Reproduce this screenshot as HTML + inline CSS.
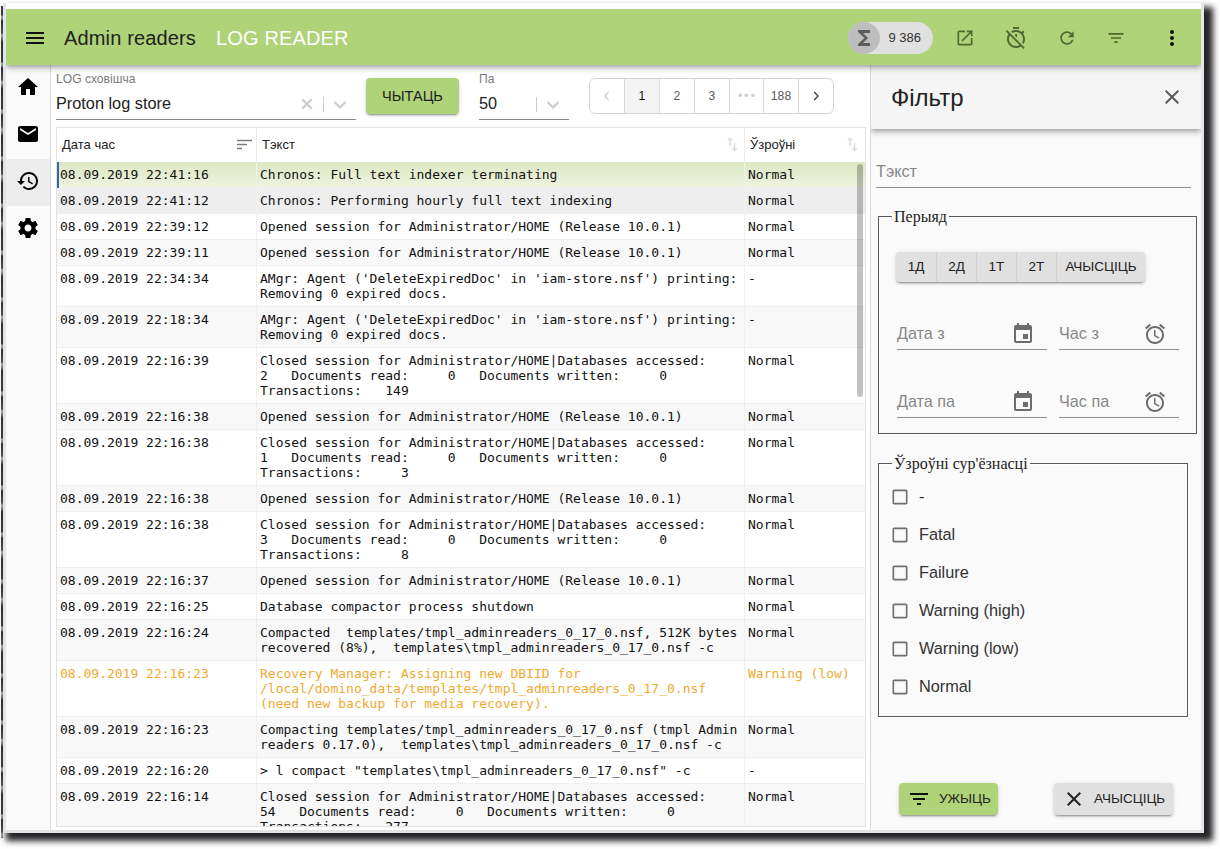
<!DOCTYPE html>
<html lang="be">
<head>
<meta charset="utf-8">
<title>Admin readers - LOG READER</title>
<style>
*{box-sizing:border-box;margin:0;padding:0}
html,body{width:1220px;height:849px;overflow:hidden;background:#fff}
body{font-family:"Liberation Sans",sans-serif;color:#212121;position:relative}
.abs{position:absolute}
#frame{position:absolute;left:6px;top:9px;width:1195px;height:821px;background:#fff;overflow:hidden}
#leftline{position:absolute;left:.8px;top:6px;width:2.400px;height:832px;filter:blur(.5px);background:repeating-linear-gradient(180deg,rgba(25,25,28,.85) 0,rgba(25,25,28,.85) 9px,rgba(25,25,28,.35) 10px,rgba(25,25,28,.45) 13px,rgba(25,25,28,.9) 15px,rgba(25,25,28,.75) 27px,rgba(25,25,28,.3) 29px,rgba(25,25,28,.6) 33px,rgba(25,25,28,.9) 36px,rgba(25,25,28,.85) 47px)}
#shadow{position:absolute;left:6px;top:7px;width:1206.500px;height:833.500px;background:#242427;filter:blur(3px)}
#paper{position:absolute;left:3px;top:3px;width:1201px;height:830px;background:#fff;border-left:3px solid #e3e3e9;border-right:3px solid #e6e6ea;border-bottom:3px solid #e2e2e4}
#appbar{position:absolute;left:0;top:0;width:1195px;height:56px;background:#aed378;box-shadow:0 2px 4px -1px rgba(0,0,0,.2),0 4px 5px 0 rgba(0,0,0,.14),0 1px 10px 0 rgba(0,0,0,.12);z-index:10}
#side{position:absolute;left:0;top:56px;width:45px;height:765px;background:#fafafa;border-right:1px solid #dcdcdc}
#main{position:absolute;left:45px;top:56px;width:820px;height:765px;background:#fff}
#panel{position:absolute;left:864px;top:56px;width:331px;height:765px;background:#fafafa;border-left:1px solid #d8d8d8;overflow:hidden}
#ptool{position:absolute;left:0;top:0;width:330px;height:64px;background:#f5f5f5;box-shadow:0 2px 4px -1px rgba(0,0,0,.2),0 4px 5px 0 rgba(0,0,0,.14),0 1px 10px 0 rgba(0,0,0,.12)}

svg.i{position:absolute;display:block}
.tt{position:absolute;white-space:nowrap}
#title{left:58px;top:17px;font-size:20px;letter-spacing:.15px;line-height:24px;color:#212121}
#sub{left:210px;top:17px;font-size:20px;letter-spacing:.15px;line-height:24px;color:#fff}
#chip{position:absolute;left:842px;top:13px;width:85px;height:32px;border-radius:16px;background:#e0e0e0}
#chip .av{position:absolute;left:0;top:0;width:32px;height:32px;border-radius:50%;background:#bdbdbd}
#chip .n{position:absolute;left:40.500px;top:0;line-height:32px;font-size:13px;color:#333}
.sitem{position:absolute;left:0;width:44px;height:47px}
.sitem.act{background:#ececec}

.lbl{position:absolute;font-size:12.100px;line-height:14px;color:#7a7a7a;white-space:nowrap}
.val{position:absolute;font-size:16.300px;line-height:20px;color:#222;white-space:nowrap}
.uline{position:absolute;height:1px;background:#858585}
.vsep{position:absolute;width:1px;height:15px;background:#ccc}
#btnread{position:absolute;left:315px;top:13px;width:93px;height:36px;border-radius:4px;background:#aed378;color:#222;font-size:14.500px;line-height:36px;text-align:center;box-shadow:0 3px 1px -2px rgba(0,0,0,.2),0 2px 2px 0 rgba(0,0,0,.14),0 1px 5px 0 rgba(0,0,0,.12)}
#pager{position:absolute;left:538px;top:13px;width:245px;height:36px;border:1px solid #d4d4d4;border-radius:6px;display:flex;overflow:hidden;background:#fff}
#pager div{position:relative;flex:0 0 auto;width:35px;border-left:1px solid #d9d9d9;text-align:center;font-size:12.200px;line-height:34px;color:#5a5a5a}
#pager div.dots{font-size:12px;letter-spacing:2.200px;padding-left:2px}
#pager div:first-child{border-left:0}
#pager .on{background:#f4f4f4;color:#111}
#pager .dis{color:#ccc}
#grid{position:absolute;left:5px;top:62px;width:810px;height:700px;border:1px solid #e2e2e2;overflow:hidden;background:#fff}
#ghead{position:absolute;left:0;top:0;width:808px;height:34px;background:#fff}
#ghead .h{position:absolute;top:0;height:34px;line-height:34px;font-size:13px;color:#222;border-right:1px solid #ececec;padding-left:5px}
#gbody{position:absolute;left:0;top:34px;width:808px}
.r{display:flex;width:808px;border-bottom:1px solid #f0f0f0;font-family:"DejaVu Sans Mono","Liberation Mono",monospace;font-size:13px;line-height:15px;color:#111;white-space:pre;background:#fff}
.r.e{background:#f8f8f8}
.r.sel{background:linear-gradient(#dde7c4,#eef3de)}
.r.hov{background:#eeeeee}
.r.w{color:#f0a92e}
.r div{padding:5px 0 5px 3px;border-right:1px solid #f0f0f0;overflow:hidden}
.r .c1{width:200px}.r .c2{width:488px}.r .c3{width:120px;border-right:0}

#ptitle{left:20px;top:19px;font-size:24px;line-height:28px;color:#222}
.ph{position:absolute;font-size:16.200px;line-height:20px;color:#878787;white-space:nowrap}
.ul2{position:absolute;height:1px;background:#8f8f8f}
fieldset.fs{position:absolute;border:1px solid #595959;box-shadow:inset 1px 1px 0 #fff,1px 1px 0 #fff;padding:0 0 0 13px;margin:0;min-width:0}
fieldset.fs legend{font-family:"Liberation Serif",serif;font-size:16px;line-height:18px;padding:0 2px;color:#222;white-space:nowrap;background:#fafafa;position:relative;top:1px}
#bgrp{position:absolute;left:25px;top:187px;height:30px;display:flex;border-radius:4px;background:#e0e0e0;box-shadow:0 3px 1px -2px rgba(0,0,0,.2),0 2px 2px 0 rgba(0,0,0,.14),0 1px 5px 0 rgba(0,0,0,.12);overflow:hidden}
#bgrp div{width:40px;text-align:center;font-size:13.500px;line-height:30px;color:#222;border-left:1px solid #cfcfcf}
#bgrp div:first-child{border-left:0}
#bgrp div.w{width:89px}
.cb{position:absolute;left:48px;font-size:16.300px;line-height:20px;color:#333;white-space:nowrap}
.pbtn{position:absolute;height:32px;border-radius:4px;font-size:13.500px;line-height:32px;color:#222;white-space:nowrap;box-shadow:0 3px 1px -2px rgba(0,0,0,.2),0 2px 2px 0 rgba(0,0,0,.14),0 1px 5px 0 rgba(0,0,0,.12)}
</style>
</head>
<body>
<div id="leftline"></div>
<div id="shadow"></div>
<div id="paper"></div>
<div id="frame">
  <div id="appbar">
    <svg class="i" style="left:17px;top:17px" width="24" height="24" viewBox="0 0 24 24" fill="#111"><path d="M3 18h18v-2H3v2zm0-5h18v-2H3v2zm0-7v2h18V6H3z"/></svg>
    <div class="tt" id="title">Admin readers</div>
    <div class="tt" id="sub">LOG READER</div>
    <div id="chip"><div class="av"></div>
      <svg class="i" style="left:4px;top:4px" width="24" height="24" viewBox="0 0 24 24" fill="#5c5c5c"><path d="M18 4H6v2l6.500 6L6 18v2h12v-3h-7l5-5-5-5h7z"/></svg>
      <div class="n">9 386</div></div>
    <svg class="i" style="left:949px;top:19px" width="20" height="20" viewBox="0 0 24 24" fill="#4f6a30"><path d="M19 19H5V5h7V3H5c-1.110 0-2 .9-2 2v14c0 1.100.890 2 2 2h14c1.100 0 2-.9 2-2v-7h-2v7zM14 3v2h3.590l-9.830 9.830 1.410 1.410L19 6.410V10h2V3h-7z"/></svg>
    <svg class="i" style="left:998.300px;top:17px" width="24" height="24" viewBox="0 0 24 24" fill="#4f6a30"><path d="M19.040 4.550l-1.420 1.420C16.070 4.740 14.120 4 12 4c-1.830 0-3.530.550-4.950 1.480l1.460 1.460C9.530 6.350 10.730 6 12 6c3.870 0 7 3.130 7 7 0 1.270-.350 2.470-.940 3.490l1.450 1.450C20.450 16.530 21 14.830 21 13c0-2.120-.740-4.070-1.970-5.610l1.420-1.420-1.410-1.420zM15 1H9v2h6V1zm-4 8.440l2 2V8h-2v1.440zM3.020 4L1.750 5.270 4.500 8.030C3.550 9.450 3 11.160 3 13c0 4.970 4.020 9 9 9 1.840 0 3.550-.550 4.980-1.500l2.500 2.500 1.270-1.270-7.710-7.710L3.020 4zM12 20c-3.870 0-7-3.130-7-7 0-1.280.350-2.480.950-3.520l9.560 9.560c-1.030.610-2.230.960-3.510.960z"/></svg>
    <svg class="i" style="left:1051px;top:19px" width="20" height="20" viewBox="0 0 24 24" fill="#4f6a30"><path d="M17.650 6.350C16.200 4.900 14.210 4 12 4c-4.420 0-7.990 3.580-7.990 8s3.570 8 7.990 8c3.730 0 6.840-2.550 7.730-6h-2.080c-.820 2.330-3.040 4-5.650 4-3.310 0-6-2.690-6-6s2.690-6 6-6c1.660 0 3.140.690 4.220 1.780L13 11h7V4l-2.350 2.350z"/></svg>
    <svg class="i" style="left:1100px;top:19px" width="20" height="20" viewBox="0 0 24 24" fill="#4f6a30"><path d="M10 18h4v-2h-4v2zM3 6v2h18V6H3zm3 7h12v-2H6v2z"/></svg>
    <svg class="i" style="left:1154px;top:17px" width="24" height="24" viewBox="0 0 24 24" fill="#111"><path d="M12 8c1.100 0 2-.9 2-2s-.9-2-2-2-2 .9-2 2 .9 2 2 2zm0 2c-1.100 0-2 .9-2 2s.9 2 2 2 2-.9 2-2-.9-2-2-2zm0 6c-1.100 0-2 .9-2 2s.9 2 2 2 2-.9 2-2-.9-2-2-2z"/></svg>
  </div>
  <div id="side">
    <div class="sitem" style="top:0"><svg class="i" style="left:10px;top:10px" width="24" height="24" viewBox="0 0 24 24" fill="#000"><path d="M10 20v-6h4v6h5v-8h3L12 3 2 12h3v8z"/></svg></div>
    <div class="sitem" style="top:47px"><svg class="i" style="left:10px;top:10px" width="24" height="24" viewBox="0 0 24 24" fill="#000"><path d="M20 4H4c-1.100 0-1.990.9-1.990 2L2 18c0 1.100.9 2 2 2h16c1.100 0 2-.9 2-2V6c0-1.100-.9-2-2-2zm0 4l-8 5-8-5V6l8 5 8-5v2z"/></svg></div>
    <div class="sitem act" style="top:94px"><svg class="i" style="left:10px;top:10px" width="24" height="24" viewBox="0 0 24 24" fill="#000"><path d="M13 3c-4.970 0-9 4.030-9 9H1l3.890 3.890.07.140L9 12H6c0-3.870 3.130-7 7-7s7 3.130 7 7-3.130 7-7 7c-1.930 0-3.680-.790-4.940-2.060l-1.420 1.420C8.270 19.990 10.510 21 13 21c4.970 0 9-4.030 9-9s-4.030-9-9-9zm-1 5v5l4.280 2.540.72-1.210-3.500-2.080V8H12z"/></svg></div>
    <div class="sitem" style="top:141px"><svg class="i" style="left:10px;top:10px" width="24" height="24" viewBox="0 0 24 24" fill="#000"><path d="M19.430 12.980c.04-.320.07-.640.07-.980s-.03-.660-.07-.980l2.110-1.650c.190-.150.240-.420.120-.640l-2-3.460c-.120-.220-.390-.3-.610-.220l-2.490 1c-.520-.4-1.080-.730-1.690-.980l-.380-2.650C14.460 2.180 14.250 2 14 2h-4c-.250 0-.460.180-.490.420l-.380 2.650c-.610.250-1.170.590-1.690.980l-2.490-1c-.230-.09-.490 0-.610.220l-2 3.460c-.130.220-.07.490.120.640l2.110 1.650c-.04.320-.07.650-.07.980s.03.660.07.980l-2.110 1.650c-.190.150-.240.420-.120.640l2 3.460c.120.220.390.3.610.220l2.490-1c.520.4 1.080.730 1.690.980l.380 2.650c.03.240.240.420.490.420h4c.250 0 .460-.180.490-.420l.380-2.650c.610-.250 1.170-.590 1.690-.980l2.490 1c.230.09.490 0 .610-.220l2-3.460c.120-.220.070-.490-.120-.640l-2.110-1.650zM12 15.500c-1.930 0-3.500-1.570-3.500-3.500s1.570-3.500 3.500-3.500 3.500 1.570 3.500 3.500-1.570 3.500-3.500 3.500z"/></svg></div>
  </div>
  <div id="main">
    <div class="lbl" style="left:5px;top:7px">LOG сховішча</div>
    <div class="val" style="left:5px;top:28px">Proton log store</div>
    <svg class="i" style="left:246px;top:29px" width="20" height="20" viewBox="0 0 20 20"><path d="M5.300 5.300l9.400 9.400M14.700 5.300l-9.400 9.400" stroke="#ccc" stroke-width="2.200" fill="none"/></svg>
    <div class="vsep" style="left:272px;top:32px"></div>
    <svg class="i" style="left:279px;top:30px" width="20" height="20" viewBox="0 0 20 20"><path d="M4.500 7l5.500 5.500L15.500 7" stroke="#ccc" stroke-width="2.200" fill="none"/></svg>
    <div class="uline" style="left:5px;top:54px;width:300px"></div>
    <div id="btnread">ЧЫТАЦЬ</div>
    <div class="lbl" style="left:428px;top:7px">Па</div>
    <div class="val" style="left:428px;top:28px">50</div>
    <div class="vsep" style="left:485px;top:32px"></div>
    <svg class="i" style="left:492px;top:30px" width="20" height="20" viewBox="0 0 20 20"><path d="M4.500 7l5.500 5.500L15.500 7" stroke="#ccc" stroke-width="2.200" fill="none"/></svg>
    <div class="uline" style="left:428px;top:54px;width:90px"></div>
    <div id="pager"><div style="width:34px"><svg class="i" style="left:12px;top:11px" width="10" height="12" viewBox="0 0 10 12"><path d="M6.600 2L2.800 6 6.600 10" stroke="#cfcfcf" stroke-width="1.300" fill="none"/></svg></div><div class="on">1</div><div>2</div><div>3</div><div class="dis dots" style="width:34px">•••</div><div style="width:35px">188</div><div style="width:35px"><svg class="i" style="left:12px;top:11px" width="10" height="12" viewBox="0 0 10 12"><path d="M3.200 2L7 6 3.200 10" stroke="#444" stroke-width="1.400" fill="none"/></svg></div></div>
    <div id="grid">
      <div id="ghead">
        <div class="h" style="left:0;width:200px">Дата час<svg class="i" style="left:180px;top:11px" width="16" height="12" viewBox="0 0 16 12"><path d="M0 1.500h15M0 5.500h10M0 9.500h5" stroke="#7c7c7c" stroke-width="1.300" fill="none"/></svg></div>
        <div class="h" style="left:200px;width:488px">Тэкст<svg class="i" style="left:470px;top:9px" width="12" height="16" viewBox="0 0 12 16"><path d="M3 8.700V1.200M0.800 3.400L3 1.200 5.200 3.400M7.600 6v7.500M5.400 11.300L7.600 13.500 9.800 11.300" stroke="#dcdcdc" stroke-width="1.400" fill="none"/></svg></div>
        <div class="h" style="left:688px;width:120px;border-right:0">Ўзроўні<svg class="i" style="left:102px;top:9px" width="12" height="16" viewBox="0 0 12 16"><path d="M3 8.700V1.200M0.800 3.400L3 1.200 5.200 3.400M7.600 6v7.500M5.400 11.300L7.600 13.500 9.800 11.300" stroke="#dcdcdc" stroke-width="1.400" fill="none"/></svg></div>
      </div>
      <div style="position:absolute;left:800px;top:36px;width:6px;height:233px;border-radius:3px;background:rgba(0,0,0,.24);z-index:5"></div>
      <div style="position:absolute;left:0;top:34px;width:2px;height:26px;background:#366a9f;z-index:5"></div>
      <div id="gbody">
<div class="r sel"><div class="c1">08.09.2019 22:41:16</div><div class="c2">Chronos: Full text indexer terminating</div><div class="c3">Normal</div></div>
<div class="r hov"><div class="c1">08.09.2019 22:41:12</div><div class="c2">Chronos: Performing hourly full text indexing</div><div class="c3">Normal</div></div>
<div class="r "><div class="c1">08.09.2019 22:39:12</div><div class="c2">Opened session for Administrator/HOME (Release 10.0.1)</div><div class="c3">Normal</div></div>
<div class="r e"><div class="c1">08.09.2019 22:39:11</div><div class="c2">Opened session for Administrator/HOME (Release 10.0.1)</div><div class="c3">Normal</div></div>
<div class="r "><div class="c1">08.09.2019 22:34:34</div><div class="c2">AMgr: Agent ('DeleteExpiredDoc' in 'iam-store.nsf') printing:<br>Removing 0 expired docs.</div><div class="c3">-</div></div>
<div class="r e"><div class="c1">08.09.2019 22:18:34</div><div class="c2">AMgr: Agent ('DeleteExpiredDoc' in 'iam-store.nsf') printing:<br>Removing 0 expired docs.</div><div class="c3">-</div></div>
<div class="r "><div class="c1">08.09.2019 22:16:39</div><div class="c2">Closed session for Administrator/HOME|Databases accessed:<br>2   Documents read:     0   Documents written:     0<br>Transactions:   149</div><div class="c3">Normal</div></div>
<div class="r e"><div class="c1">08.09.2019 22:16:38</div><div class="c2">Opened session for Administrator/HOME (Release 10.0.1)</div><div class="c3">Normal</div></div>
<div class="r "><div class="c1">08.09.2019 22:16:38</div><div class="c2">Closed session for Administrator/HOME|Databases accessed:<br>1   Documents read:     0   Documents written:     0<br>Transactions:     3</div><div class="c3">Normal</div></div>
<div class="r e"><div class="c1">08.09.2019 22:16:38</div><div class="c2">Opened session for Administrator/HOME (Release 10.0.1)</div><div class="c3">Normal</div></div>
<div class="r "><div class="c1">08.09.2019 22:16:38</div><div class="c2">Closed session for Administrator/HOME|Databases accessed:<br>3   Documents read:     0   Documents written:     0<br>Transactions:     8</div><div class="c3">Normal</div></div>
<div class="r e"><div class="c1">08.09.2019 22:16:37</div><div class="c2">Opened session for Administrator/HOME (Release 10.0.1)</div><div class="c3">Normal</div></div>
<div class="r "><div class="c1">08.09.2019 22:16:25</div><div class="c2">Database compactor process shutdown</div><div class="c3">Normal</div></div>
<div class="r e"><div class="c1">08.09.2019 22:16:24</div><div class="c2">Compacted  templates/tmpl_adminreaders_0_17_0.nsf, 512K bytes<br>recovered (8%),  templates\tmpl_adminreaders_0_17_0.nsf -c</div><div class="c3">Normal</div></div>
<div class="r w"><div class="c1">08.09.2019 22:16:23</div><div class="c2">Recovery Manager: Assigning new DBIID for<br>/local/domino_data/templates/tmpl_adminreaders_0_17_0.nsf<br>(need new backup for media recovery).</div><div class="c3">Warning (low)</div></div>
<div class="r e"><div class="c1">08.09.2019 22:16:23</div><div class="c2">Compacting templates/tmpl_adminreaders_0_17_0.nsf (tmpl Admin<br>readers 0.17.0),  templates\tmpl_adminreaders_0_17_0.nsf -c</div><div class="c3">Normal</div></div>
<div class="r "><div class="c1">08.09.2019 22:16:20</div><div class="c2">&gt; l compact "templates\tmpl_adminreaders_0_17_0.nsf" -c</div><div class="c3">-</div></div>
<div class="r e"><div class="c1">08.09.2019 22:16:14</div><div class="c2">Closed session for Administrator/HOME|Databases accessed:<br>54   Documents read:     0   Documents written:     0<br>Transactions:   277</div><div class="c3">Normal</div></div>
      </div>
    </div>
  </div>
  <div id="panel">
    <div class="ph" style="left:5px;top:96px">Тэкст</div>
    <div class="ul2" style="left:5px;top:122px;width:315px"></div>
    <fieldset class="fs" style="left:7px;top:142px;width:319px;height:227px"><legend>Перыяд</legend></fieldset>
    <div id="bgrp"><div>1Д</div><div>2Д</div><div>1Т</div><div>2Т</div><div class="w">АЧЫСЦІЦЬ</div></div>
    <div class="ph" style="left:26px;top:258px">Дата з</div>
    <svg class="i" style="left:139.6px;top:257px" width="24" height="24" viewBox="0 0 24 24" fill="#6c6c6c"><path d="M17 12h-5v5h5v-5zM16 1v2H8V1H6v2H5c-1.110 0-1.990.9-1.990 2L3 19c0 1.100.890 2 2 2h14c1.100 0 2-.9 2-2V5c0-1.100-.9-2-2-2h-1V1h-2zm3 18H5V8h14v11z"/></svg>
    <div class="ul2" style="left:26px;top:284px;width:150px"></div>
    <div class="ph" style="left:188px;top:258px">Час з</div>
    <svg class="i" style="left:272.3px;top:257px" width="24" height="24" viewBox="0 0 24 24" fill="#6c6c6c"><path d="M22 5.720l-4.600-3.860-1.290 1.530 4.600 3.860L22 5.720zM7.880 3.390L6.600 1.860 2 5.710l1.290 1.530 4.590-3.850zM12.500 8H11v6l4.750 2.850.75-1.230-4-2.370V8zM12 4c-4.970 0-9 4.030-9 9s4.020 9 9 9c4.970 0 9-4.030 9-9s-4.030-9-9-9zm0 16c-3.870 0-7-3.130-7-7s3.130-7 7-7 7 3.130 7 7-3.130 7-7 7z"/></svg>
    <div class="ul2" style="left:188px;top:284px;width:120px"></div>
    <div class="ph" style="left:26px;top:326px">Дата па</div>
    <svg class="i" style="left:139.6px;top:325px" width="24" height="24" viewBox="0 0 24 24" fill="#6c6c6c"><path d="M17 12h-5v5h5v-5zM16 1v2H8V1H6v2H5c-1.110 0-1.990.9-1.990 2L3 19c0 1.100.890 2 2 2h14c1.100 0 2-.9 2-2V5c0-1.100-.9-2-2-2h-1V1h-2zm3 18H5V8h14v11z"/></svg>
    <div class="ul2" style="left:26px;top:352px;width:150px"></div>
    <div class="ph" style="left:188px;top:326px">Час па</div>
    <svg class="i" style="left:272.3px;top:325px" width="24" height="24" viewBox="0 0 24 24" fill="#6c6c6c"><path d="M22 5.720l-4.600-3.860-1.290 1.530 4.600 3.860L22 5.720zM7.880 3.390L6.600 1.860 2 5.710l1.290 1.530 4.590-3.850zM12.500 8H11v6l4.750 2.850.75-1.230-4-2.370V8zM12 4c-4.970 0-9 4.030-9 9s4.020 9 9 9c4.970 0 9-4.030 9-9s-4.030-9-9-9zm0 16c-3.870 0-7-3.130-7-7s3.130-7 7-7 7 3.130 7 7-3.130 7-7 7z"/></svg>
    <div class="ul2" style="left:188px;top:352px;width:120px"></div>
    <fieldset class="fs" style="left:7px;top:389px;width:310px;height:263px"><legend>Ўзроўні сур'ёзнасці</legend></fieldset>
<svg class="i" style="left:19px;top:422px" width="20" height="20" viewBox="0 0 24 24" fill="#6e6e6e"><path d="M19 5v14H5V5h14m0-2H5c-1.100 0-2 .9-2 2v14c0 1.100.9 2 2 2h14c1.100 0 2-.9 2-2V5c0-1.100-.9-2-2-2z"/></svg><div class="cb" style="top:421px">-</div>
<svg class="i" style="left:19px;top:460px" width="20" height="20" viewBox="0 0 24 24" fill="#6e6e6e"><path d="M19 5v14H5V5h14m0-2H5c-1.100 0-2 .9-2 2v14c0 1.100.9 2 2 2h14c1.100 0 2-.9 2-2V5c0-1.100-.9-2-2-2z"/></svg><div class="cb" style="top:459px">Fatal</div>
<svg class="i" style="left:19px;top:498px" width="20" height="20" viewBox="0 0 24 24" fill="#6e6e6e"><path d="M19 5v14H5V5h14m0-2H5c-1.100 0-2 .9-2 2v14c0 1.100.9 2 2 2h14c1.100 0 2-.9 2-2V5c0-1.100-.9-2-2-2z"/></svg><div class="cb" style="top:497px">Failure</div>
<svg class="i" style="left:19px;top:536px" width="20" height="20" viewBox="0 0 24 24" fill="#6e6e6e"><path d="M19 5v14H5V5h14m0-2H5c-1.100 0-2 .9-2 2v14c0 1.100.9 2 2 2h14c1.100 0 2-.9 2-2V5c0-1.100-.9-2-2-2z"/></svg><div class="cb" style="top:535px">Warning (high)</div>
<svg class="i" style="left:19px;top:574px" width="20" height="20" viewBox="0 0 24 24" fill="#6e6e6e"><path d="M19 5v14H5V5h14m0-2H5c-1.100 0-2 .9-2 2v14c0 1.100.9 2 2 2h14c1.100 0 2-.9 2-2V5c0-1.100-.9-2-2-2z"/></svg><div class="cb" style="top:573px">Warning (low)</div>
<svg class="i" style="left:19px;top:612px" width="20" height="20" viewBox="0 0 24 24" fill="#6e6e6e"><path d="M19 5v14H5V5h14m0-2H5c-1.100 0-2 .9-2 2v14c0 1.100.9 2 2 2h14c1.100 0 2-.9 2-2V5c0-1.100-.9-2-2-2z"/></svg><div class="cb" style="top:611px">Normal</div>

    <div class="pbtn" style="left:28px;top:718px;width:99px;background:#aed378"><svg class="i" style="left:8px;top:4px" width="24" height="24" viewBox="0 0 24 24" fill="#111"><path d="M10 18h4v-2h-4v2zM3 6v2h18V6H3zm3 7h12v-2H6v2z"/></svg><span style="position:absolute;left:40px">УЖЫЦЬ</span></div>
    <div class="pbtn" style="left:183px;top:718px;width:119px;background:#e0e0e0"><svg class="i" style="left:8px;top:4px" width="24" height="24" viewBox="0 0 24 24" fill="#222"><path d="M19 6.410L17.590 5 12 10.590 6.410 5 5 6.410 10.590 12 5 17.590 6.410 19 12 13.410 17.590 19 19 17.590 13.410 12z"/></svg><span style="position:absolute;left:40px">АЧЫСЦІЦЬ</span></div>
    <div id="ptool"><div class="tt" id="ptitle">Фільтр</div><svg class="i" style="left:289px;top:20px" width="24" height="24" viewBox="0 0 24 24" fill="#5a5a5a"><path d="M19 6.410L17.590 5 12 10.590 6.410 5 5 6.410 10.590 12 5 17.590 6.410 19 12 13.410 17.590 19 19 17.590 13.410 12z"/></svg></div>
  </div>
</div>
</body>
</html>
